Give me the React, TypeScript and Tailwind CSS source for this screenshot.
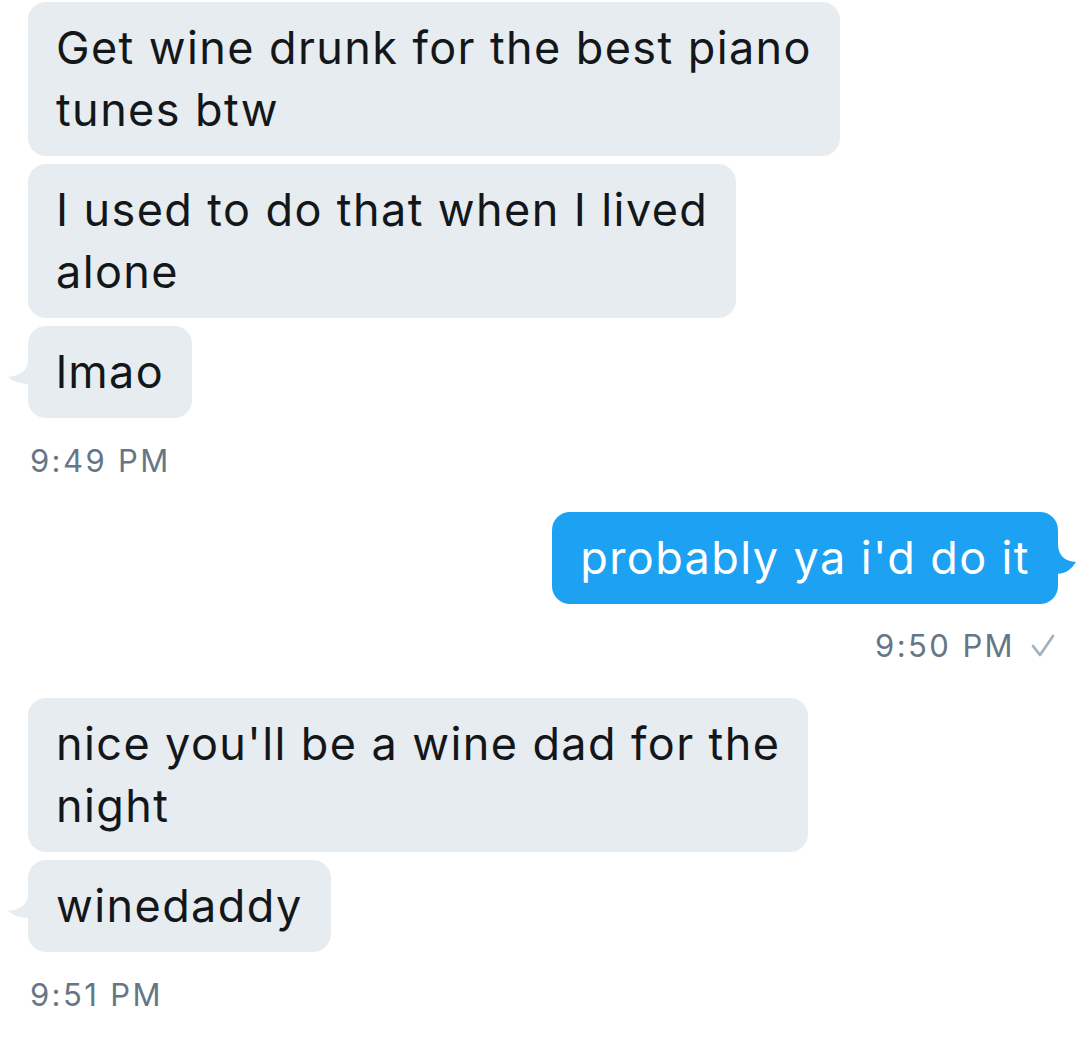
import type { ReactNode } from 'react'

function TailLeft() {
  return (
    <svg className="absolute -left-[20px] bottom-[33px]" width="21" height="24" viewBox="0 0 21 24">
      <path d="M21 0 L20 0 Q19 14 0 16 Q8 23 21 23 Z" fill="#e6ecf0" />
    </svg>
  )
}

function TailRight() {
  return (
    <svg className="absolute -right-[18px] bottom-[29px]" width="19" height="30" viewBox="0 0 19 30">
      <path d="M0 0 L1 0 Q2 16 19 17 Q12 29 0 29 Z" fill="#1da1f2" />
    </svg>
  )
}

function Incoming({ lines, tail }: { lines: string[]; tail?: boolean }) {
  return (
    <div className="relative self-start rounded-[18px] bg-[#e6ecf0] px-[28px] py-[15px] text-[#14171a]">
      {lines.map((l) => (
        <div key={l} className="whitespace-nowrap leading-[62px]">{l}</div>
      ))}
      {tail && <TailLeft />}
    </div>
  )
}

function Stamp({ children, right }: { children: ReactNode; right?: boolean }) {
  return (
    <div className={`flex h-[40px] items-center gap-[16px] text-[31px] tracking-[2.4px] text-[#657786] ${right ? 'self-end pr-[32px]' : 'self-start pl-[30px]'}`}>
      {children}
    </div>
  )
}

export default function App() {
  return (
    <div
      className="flex min-h-[1038px] w-[1087px] flex-col gap-[8px] bg-white pt-[2px] text-[45px] tracking-[1.4px]"
      style={{ fontFamily: 'Inter, "Liberation Sans", sans-serif' }}
    >
      <div className="flex flex-col gap-[8px] pl-[28px]">
        <Incoming lines={['Get wine drunk for the best piano', 'tunes btw']} />
        <Incoming lines={['I used to do that when I lived', 'alone']} />
        <Incoming lines={['lmao']} tail />
      </div>
      <div className="mt-[15px] mb-[23px] flex flex-col"><Stamp>9:49 PM</Stamp></div>

      <div className="flex flex-col pr-[29px]">
        <div className="relative self-end rounded-[18px] bg-[#1da1f2] px-[28px] py-[15px] text-white">
          <div className="whitespace-nowrap leading-[62px]">probably ya i'd do it</div>
          <TailRight />
        </div>
      </div>
      <div className="mt-[14px] mb-[24px] flex flex-col">
        <Stamp right>
          <span>9:50 PM</span>
          <svg width="24" height="24" viewBox="0 0 24 24">
            <path d="M2 12 L9 21 L22 2" fill="none" stroke="#a4b2bd" strokeWidth="2.8" strokeLinecap="round" strokeLinejoin="round" />
          </svg>
        </Stamp>
      </div>

      <div className="flex flex-col gap-[8px] pl-[28px]">
        <Incoming lines={["nice you'll be a wine dad for the", 'night']} />
        <Incoming lines={['winedaddy']} tail />
      </div>
      <div className="mt-[15px] flex flex-col"><Stamp>9:51 PM</Stamp></div>
    </div>
  )
}
